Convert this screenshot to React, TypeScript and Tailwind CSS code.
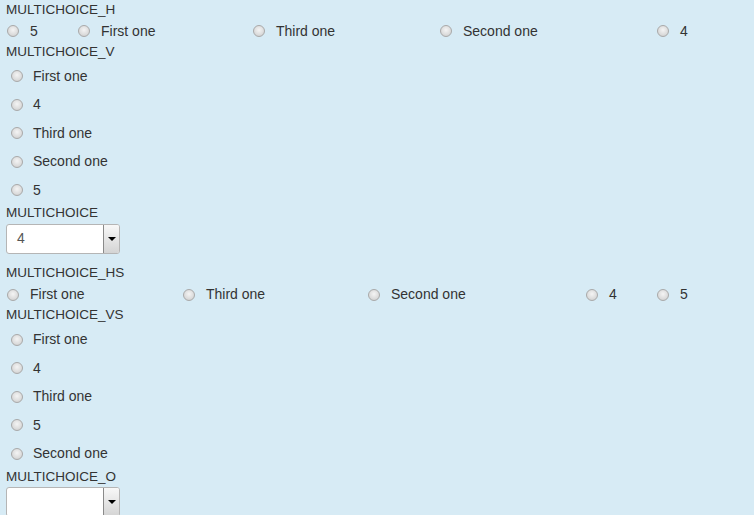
const font = { fontFamily: '"Liberation Sans", Arial, sans-serif' };

type Item = { text: string; w?: string };

function Radio() {
  return (
    <span className="inline-block h-[12px] w-[12px] shrink-0 rounded-full border border-[#a9a9a9] bg-[radial-gradient(circle_at_50%_40%,#f4f4f4_0%,#dcdcdc_60%,#c8c8c8_100%)]" />
  );
}

function Label({ children, className = "" }: { children: string; className?: string }) {
  return <div className={`flex h-[18px] items-center pl-[6px] text-[13.5px] ${className}`}>{children}</div>;
}

function HRow({ items }: { items: Item[] }) {
  return (
    <div className="flex h-[24px] items-center pl-[7px] text-[14px]">
      {items.map((it, i) => (
        <div key={i} className={`flex items-center gap-[11px] ${it.w ?? ""}`}>
          <Radio />
          <span>{it.text}</span>
        </div>
      ))}
    </div>
  );
}

function VList({ items }: { items: string[] }) {
  return (
    <div className="text-[14px]">
      {items.map((t, i) => (
        <div key={i} className="flex h-[28.5px] items-center gap-[10px] pl-[11px]">
          <Radio />
          <span>{t}</span>
        </div>
      ))}
    </div>
  );
}

function Select({ value }: { value: string }) {
  return (
    <div className="ml-[6px] flex h-[30px] w-[114px] items-stretch overflow-hidden rounded-[3px] border border-[#b5b5b5] bg-white">
      <div className="flex flex-1 items-center pl-[10px] text-[14px] text-[#555]">{value}</div>
      <div className="flex w-[16px] items-center justify-center border-l border-[#8a8a8a] bg-[linear-gradient(#f8f8f8,#d4d4d4)]">
        <span className="h-0 w-0 border-x-[4px] border-t-[4px] border-x-transparent border-t-black" />
      </div>
    </div>
  );
}

export default function App() {
  return (
    <div className="h-[515px] w-[754px] overflow-hidden bg-[#d7ebf5] pt-[1px] text-[#333]" style={font}>
      <Label>MULTICHOICE_H</Label>
      <HRow
        items={[
          { text: "5", w: "w-[71px]" },
          { text: "First one", w: "w-[175px]" },
          { text: "Third one", w: "w-[187px]" },
          { text: "Second one", w: "w-[217px]" },
          { text: "4" },
        ]}
      />
      <Label>MULTICHOICE_V</Label>
      <div className="pt-[1px]">
        <VList items={["First one", "4", "Third one", "Second one", "5"]} />
      </div>
      <Label>MULTICHOICE</Label>
      <div className="pt-[1px]">
        <Select value="4" />
      </div>
      <Label className="mt-[11px]">MULTICHOICE_HS</Label>
      <HRow
        items={[
          { text: "First one", w: "w-[176px]" },
          { text: "Third one", w: "w-[185px]" },
          { text: "Second one", w: "w-[218px]" },
          { text: "4", w: "w-[71px]" },
          { text: "5" },
        ]}
      />
      <Label>MULTICHOICE_VS</Label>
      <div className="pt-[1px]">
        <VList items={["First one", "4", "Third one", "5", "Second one"]} />
      </div>
      <Label>MULTICHOICE_O</Label>
      <div className="pt-[1px]">
        <Select value="" />
      </div>
    </div>
  );
}
